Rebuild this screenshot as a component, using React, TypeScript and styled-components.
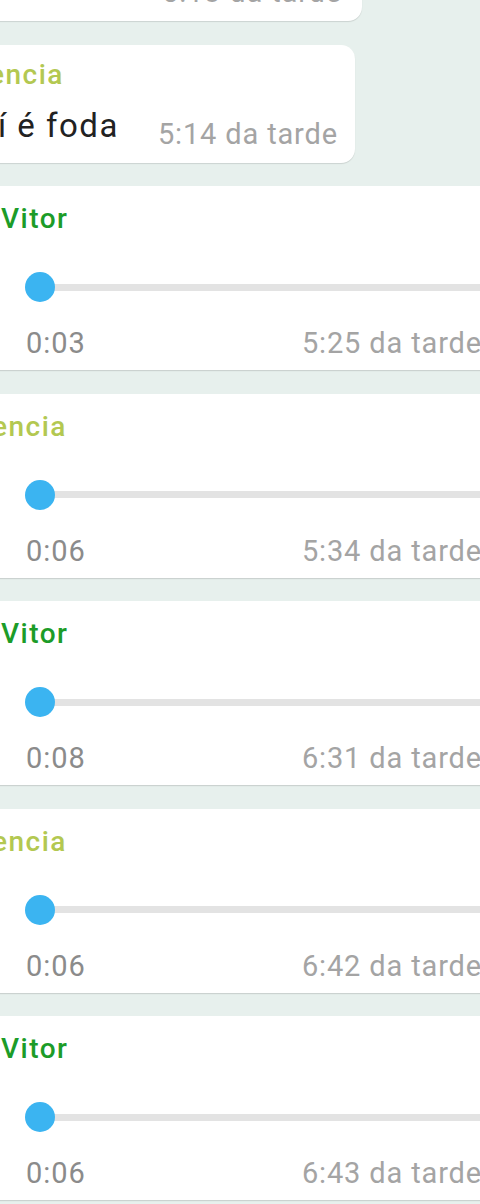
import React from 'react';
import styled, { createGlobalStyle } from 'styled-components';

const GlobalStyle = createGlobalStyle`
  html, body {
    margin: 0;
    padding: 0;
    background: #e7f0ed;
  }
  body {
    font-family: Roboto, "Noto Sans", "Liberation Sans", sans-serif;
  }
`;

// Layout
const Screen = styled.div`
  width: 480px;
  height: 1204px;
  overflow: hidden;
  background: #e7f0ed;
`;

const Feed = styled.div`
  display: flex;
  flex-direction: column;
  gap: 23.5px;
  margin-top: -35px;
`;

// Text bubbles
const Bubble = styled.div<{ $top?: number; $right?: number }>`
  align-self: flex-start;
  margin-left: -30px;
  padding: ${({ $top }) => $top ?? 13}px ${({ $right }) => $right ?? 17}px 12px 28px;
  background: #ffffff;
  border-radius: 0 14px 14px 0;
  box-shadow: 0 1px 1px rgba(0, 0, 0, 0.12);
`;

const Sender = styled.div<{ $color: string; $shift?: number }>`
  margin-left: ${({ $shift }) => $shift ?? 0}px;
  font-size: 28px;
  line-height: 34px;
  font-weight: 500;
  letter-spacing: 1.5px;
  color: ${({ $color }) => $color};
  white-space: nowrap;
`;

const MessageRow = styled.div<{ $top?: number }>`
  display: flex;
  align-items: flex-end;
  margin-top: ${({ $top }) => $top ?? 15}px;
`;

const MessageText = styled.div`
  font-size: 33px;
  line-height: 38px;
  letter-spacing: 1.5px;
  color: #222222;
  margin-bottom: 6px;
  white-space: nowrap;
`;

const Stamp = styled.div<{ $gap?: number }>`
  margin-left: ${({ $gap }) => $gap ?? 0}px;
  font-size: 29px;
  line-height: 34px;
  letter-spacing: 0.85px;
  color: #a4a4a4;
  white-space: nowrap;
`;

// Voice cards
const VoiceCard = styled.div`
  width: 520px;
  margin-left: -20px;
  box-sizing: border-box;
  padding: 16px 18px 10px 21px;
  background: #ffffff;
  box-shadow: 0 1px 1px rgba(0, 0, 0, 0.12);
`;

const Slider = styled.div`
  display: flex;
  align-items: center;
  height: 30px;
  margin: 36px 0 0 24px;
`;

const Thumb = styled.div`
  width: 30px;
  height: 30px;
  border-radius: 50%;
  background: #3bb4f1;
  position: relative;
  z-index: 1;
  flex-shrink: 0;
`;

const Track = styled.div`
  flex: 1;
  height: 7px;
  margin-left: -15px;
  margin-right: -40px;
  background: #e3e3e3;
  border-radius: 4px;
`;

const MetaRow = styled.div`
  display: flex;
  justify-content: space-between;
  align-items: baseline;
  margin: 24px 0 0 25px;
`;

const Duration = styled.div`
  font-size: 29px;
  line-height: 34px;
  letter-spacing: 1px;
  color: #8b8b8b;
`;

const GREEN = '#1c9c28';
const OLIVE = '#b3c851';

type Voice = { name: string; color: string; duration: string; time: string };

const voices: Voice[] = [
  { name: 'Vitor', color: GREEN, duration: '0:03', time: '5:25 da tarde' },
  { name: 'encia', color: OLIVE, duration: '0:06', time: '5:34 da tarde' },
  { name: 'Vitor', color: GREEN, duration: '0:08', time: '6:31 da tarde' },
  { name: 'encia', color: OLIVE, duration: '0:06', time: '6:42 da tarde' },
  { name: 'Vitor', color: GREEN, duration: '0:06', time: '6:43 da tarde' },
];

const VoiceMessage: React.FC<{ voice: Voice }> = ({ voice }) => (
  <VoiceCard>
    <Sender $color={voice.color} $shift={voice.color === OLIVE ? -9 : 0}>
      {voice.name}
    </Sender>
    <Slider>
      <Thumb />
      <Track />
    </Slider>
    <MetaRow>
      <Duration>{voice.duration}</Duration>
      <Stamp>{voice.time}</Stamp>
    </MetaRow>
  </VoiceCard>
);

const App: React.FC = () => (
  <>
    <GlobalStyle />
    <Screen>
      <Feed>
        <Bubble $top={10} $right={20}>
          <MessageRow $top={0}>
            <Stamp $gap={164}>5:13 da tarde</Stamp>
          </MessageRow>
        </Bubble>

        <Bubble>
          <Sender $color={OLIVE} $shift={-9}>encia</Sender>
          <MessageRow>
            <MessageText>í é foda</MessageText>
            <Stamp $gap={39}>5:14 da tarde</Stamp>
          </MessageRow>
        </Bubble>

        {voices.map((v, i) => (
          <VoiceMessage key={i} voice={v} />
        ))}
      </Feed>
    </Screen>
  </>
);

export default App;
